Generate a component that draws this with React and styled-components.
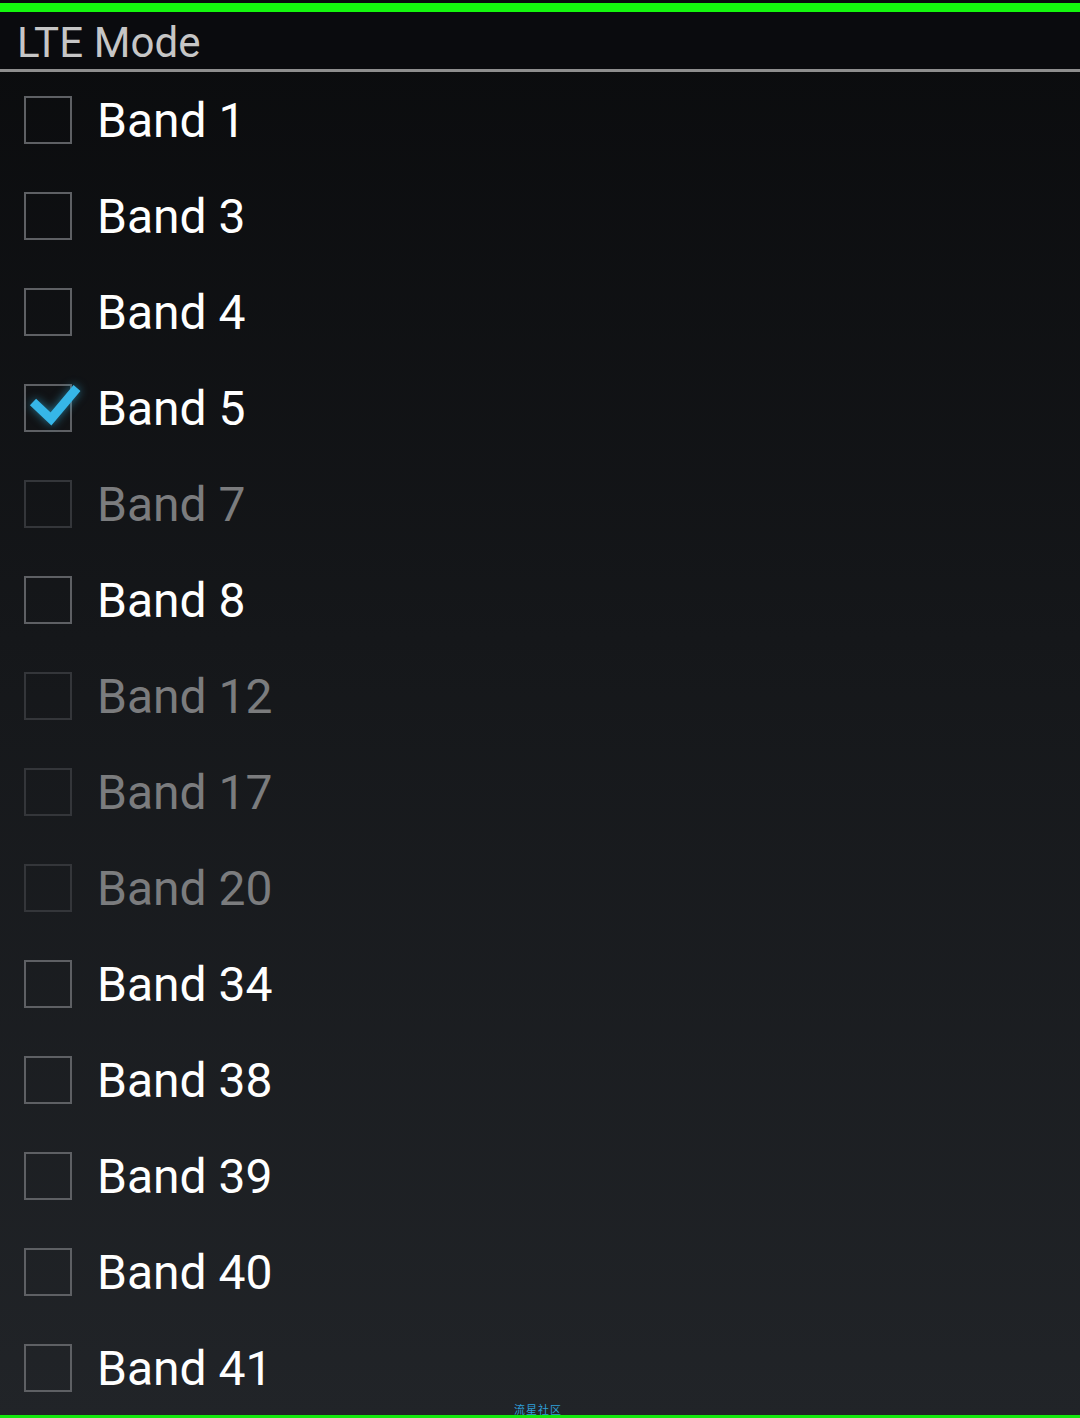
import React from "react";
import styled, { createGlobalStyle } from "styled-components";

const bands = [
  { name: "Band 1" },
  { name: "Band 3" },
  { name: "Band 4" },
  { name: "Band 5", checked: true },
  { name: "Band 7", disabled: true },
  { name: "Band 8" },
  { name: "Band 12", disabled: true },
  { name: "Band 17", disabled: true },
  { name: "Band 20", disabled: true },
  { name: "Band 34" },
  { name: "Band 38" },
  { name: "Band 39" },
  { name: "Band 40" },
  { name: "Band 41" },
];

const GlobalStyle = createGlobalStyle`
  html, body {
    margin: 0;
    padding: 0;
    background: #0a0b0d;
  }
  body {
    font-family: Roboto, "Liberation Sans", sans-serif;
  }
`;

const Screen = styled.div`
  width: 1080px;
  height: 1418px;
  overflow: hidden;
  display: flex;
  flex-direction: column;
  position: relative;
  background: linear-gradient(180deg, #0a0b0d 0%, #15171a 45%, #212428 100%);
`;

const TopStrip = styled.div`
  height: 3px;
  background: #0a0b0d;
`;

const GreenBar = styled.div`
  height: 9px;
  background: #14f80e;
`;

const Header = styled.div`
  height: 60px;
  box-sizing: border-box;
  background: #0a0b0e;
  display: flex;
  align-items: center;
  padding-left: 17px;
  border-bottom: 3px solid #8e8e8e;
`;

const Title = styled.span`
  font-size: 42px;
  color: #c6c6c6;
  letter-spacing: 0.1px;
  margin-top: 3px;
`;

const List = styled.div`
  display: flex;
  flex-direction: column;
`;

const Row = styled.div`
  height: 96px;
  display: flex;
  align-items: center;
  padding-left: 24px;
`;

const Box = styled.div`
  width: 48px;
  height: 48px;
  box-sizing: border-box;
  border: 2px solid ${(p) => (p.$disabled ? "#34363a" : "#5e6064")};
  position: relative;
  flex-shrink: 0;
`;

const Check = styled.svg`
  position: absolute;
  left: -2px;
  top: -14px;
  width: 64px;
  height: 64px;
  overflow: visible;
  filter: drop-shadow(0 0 5px rgba(51, 181, 229, 0.6));
`;

const Label = styled.span`
  margin-left: 25px;
  font-size: 48px;
  color: ${(p) => (p.$disabled ? "#7b7c7e" : "#ffffff")};
  line-height: 1;
  margin-top: 2px;
`;

const BottomBar = styled.div`
  position: absolute;
  left: 0;
  right: 0;
  bottom: 0;
  height: 3px;
  background: #14e80e;
`;

const Watermark = styled.span`
  position: absolute;
  left: 514px;
  bottom: 3px;
  font-family: "Noto Sans CJK SC", sans-serif;
  font-size: 11px;
  line-height: 12px;
  color: #2f9fd8;
  letter-spacing: 1px;
`;

export default function App() {
  return (
    <Screen>
      <GlobalStyle />
      <TopStrip />
      <GreenBar />
      <Header>
        <Title>LTE Mode</Title>
      </Header>
      <List>
        {bands.map((b) => (
          <Row key={b.name}>
            <Box $disabled={b.disabled}>
              {b.checked && (
                <Check viewBox="0 0 64 64">
                  <path
                    d="M9 30 L27 47 L53 16"
                    fill="none"
                    stroke="#36b6e8"
                    strokeWidth="9"
                    strokeLinejoin="miter"
                  />
                </Check>
              )}
            </Box>
            <Label $disabled={b.disabled}>{b.name}</Label>
          </Row>
        ))}
      </List>
      <Watermark>流星社区</Watermark>
      <BottomBar />
    </Screen>
  );
}
